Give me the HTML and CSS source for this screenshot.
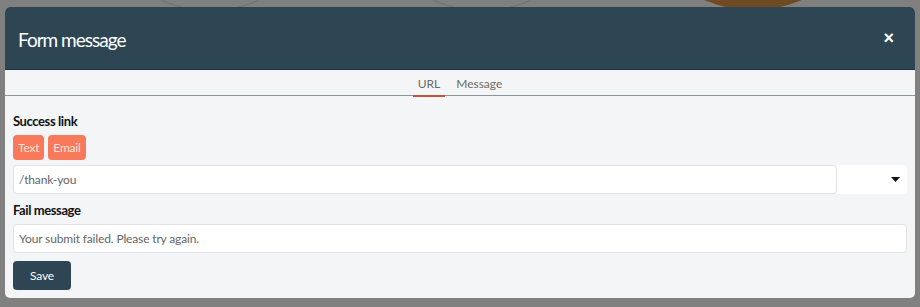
FILE: index.html
```html
<!DOCTYPE html>
<html lang="en">
<head>
  <meta charset="UTF-8">
  <meta name="viewport" content="width=device-width, initial-scale=1.0">
  <title>Form message</title>
  <link rel="stylesheet" href="styles.css">
</head>
<body>
  <div class="backdrop">
    <div class="ring ring-one"></div>
    <div class="ring ring-two"></div>
    <div class="blob"></div>
  </div>

  <div class="modal">
    <div class="modal-header">
      <h1>Form message</h1>
      <button class="close">&times;</button>
    </div>

    <div class="tabs">
      <span class="tab active">URL</span>
      <span class="tab">Message</span>
    </div>

    <div class="modal-body">
      <label class="field-label">Success link</label>
      <div class="chips">
        <button class="chip">Text</button>
        <button class="chip">Email</button>
      </div>
      <div class="link-row">
        <input type="text" class="text-input" value="/thank-you">
        <div class="select">
          <svg width="9" height="5" viewBox="0 0 9 5"><path d="M0 0h9L4.5 5z" fill="#111"/></svg>
        </div>
      </div>

      <label class="field-label">Fail message</label>
      <input type="text" class="text-input full" value="Your submit failed. Please try again.">

      <button class="save">Save</button>
    </div>
  </div>
</body>
</html>
```

FILE: styles.css
```css
body {
  margin: 0;
  height: 307px;
  overflow: hidden;
  background-color: #808080;
  font-family: Lato, "Open Sans", sans-serif;
  position: relative;
}
.backdrop {
  position: absolute;
  top: 0;
  left: 0;
  width: 100%;
  height: 20px;
}
.ring {
  position: absolute;
  border: 1px solid #6f6f6f;
  border-radius: 50%;
}
.ring-one {
  left: 88px;
  top: -233px;
  width: 242px;
  height: 242px;
}
.ring-two {
  left: 360px;
  top: -233px;
  width: 242px;
  height: 242px;
}
.blob {
  position: absolute;
  left: 632px;
  top: -120px;
  width: 242px;
  height: 130px;
  background-color: #6e4b22;
  border-radius: 0 0 120px 120px;
}
.modal {
  position: relative;
  margin: 7px 5px 0;
  background-color: #f4f5f7;
  border-radius: 5px;
  overflow: hidden;
}
.modal-header {
  height: 62px;
  background-color: #2e4553;
  display: flex;
  align-items: center;
  justify-content: space-between;
  padding: 0 21px 0 13px;
  border-bottom: 1px solid #1f313c;
}
.modal-header h1 {
  margin: 0;
  color: #fff;
  font-size: 19px;
  font-weight: 400;
  letter-spacing: -1px;
  padding-top: 2px;
}
.close {
  background: none;
  border: none;
  color: #fff;
  font-size: 18px;
  font-weight: 700;
  padding: 0;
  line-height: 1;
  font-family: Arial, sans-serif;
}
.tabs {
  display: flex;
  justify-content: center;
  gap: 6px;
  height: 25px;
  border-bottom: 1px solid #8a949b;
}
.tab {
  font-size: 12px;
  color: #6b6b6b;
  padding: 6px 5px 0;
  height: 19px;
}
.tab.active {
  border-bottom: 2px solid #c0533a;
}
.modal-body {
  padding: 16px 8px 8px;
}
.field-label {
  display: block;
  font-size: 13px;
  font-weight: 700;
  letter-spacing: -0.4px;
  color: #111;
  line-height: 18px;
  margin-bottom: 5px;
}
.chips {
  display: flex;
  gap: 4px;
  margin-bottom: 5px;
}
.chip {
  background-color: #f87a5a;
  color: #fde3da;
  border: none;
  border-radius: 4px;
  font-family: inherit;
  font-size: 12px;
  letter-spacing: -0.2px;
  height: 25px;
  padding: 0 5px;
}
.link-row {
  display: flex;
  margin-bottom: 7px;
}
.text-input {
  flex: 1;
  height: 29px;
  box-sizing: border-box;
  border: 1px solid #e2e2e2;
  border-radius: 4px;
  background-color: #fff;
  font-family: inherit;
  font-size: 12px;
  letter-spacing: -0.15px;
  color: #666;
  padding: 0 5px;
}
.text-input.full {
  display: block;
  width: 100%;
  margin-bottom: 8px;
}
.select {
  width: 70px;
  height: 29px;
  background-color: #fff;
  border-radius: 0 4px 4px 0;
  display: flex;
  align-items: center;
  justify-content: flex-end;
  padding-right: 7px;
  box-sizing: border-box;
}
.save {
  display: block;
  background-color: #2e4553;
  color: #fff;
  border: none;
  border-radius: 4px;
  font-family: inherit;
  font-size: 12px;
  letter-spacing: -0.2px;
  width: 58px;
  height: 29px;
}
```
